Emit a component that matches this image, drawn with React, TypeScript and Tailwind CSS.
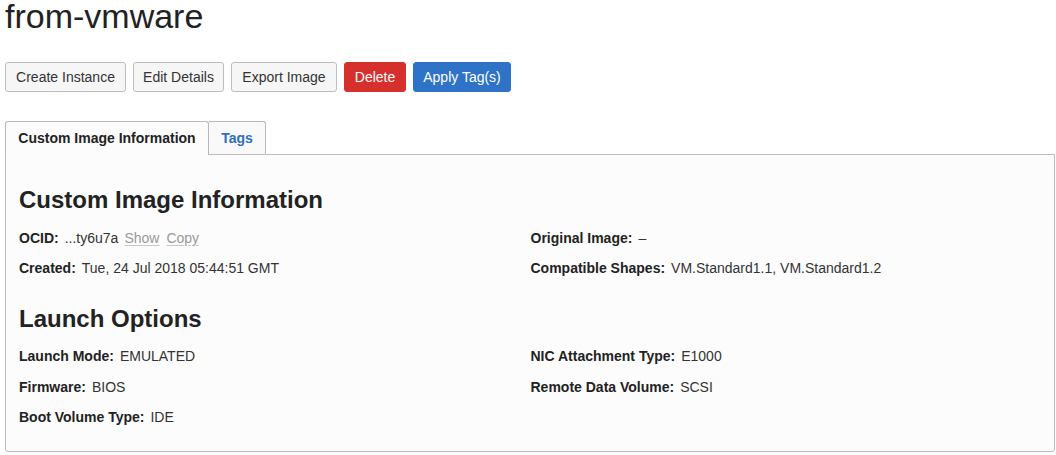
const font = { fontFamily: '"Liberation Sans", Arial, Helvetica, sans-serif' };

interface FieldProps {
  label: string;
  children: React.ReactNode;
}

const Field = ({ label, children }: FieldProps) => (
  <div className="flex items-baseline h-5 leading-5 text-[14px]">
    <span className="font-bold text-[#222]">{label}</span>
    <span className="ml-[6px] text-[#333]">{children}</span>
  </div>
);

const ActionButton = ({ label, width, tone = "default" }: { label: string; width: string; tone?: "default" | "danger" | "primary" }) => {
  const tones = {
    default: "bg-[#f6f6f6] border-[#bdbdbd] text-[#333]",
    danger: "bg-[#d6302d] border-[#d6302d] text-white",
    primary: "bg-[#2e73c7] border-[#2e73c7] text-white",
  };
  return (
    <button
      className={`${width} h-[30px] border rounded-[3px] text-[14px] leading-none flex items-center justify-center ${tones[tone]}`}
    >
      {label}
    </button>
  );
};

export default function App() {
  return (
    <div className="min-h-screen bg-white pl-[5px] pr-[1px]" style={font}>
      {/* Page title */}
      <h1 className="text-[34px] leading-[32px] text-[#222] font-normal">from-vmware</h1>

      {/* Action buttons */}
      <div className="flex gap-[7px] mt-[30px]">
        <ActionButton label="Create Instance" width="w-[121px]" />
        <ActionButton label="Edit Details" width="w-[91px]" />
        <ActionButton label="Export Image" width="w-[106px]" />
        <ActionButton label="Delete" width="w-[62px]" tone="danger" />
        <ActionButton label="Apply Tag(s)" width="w-[98px]" tone="primary" />
      </div>

      {/* Tabs */}
      <div className="flex items-start mt-[29px] relative z-10 h-[33px]">
        <div className="w-[204px] h-[34px] border border-b-0 border-[#b8b8b8] rounded-t-[3px] bg-[#fcfcfc] flex items-center justify-center text-[14px] font-bold text-[#222]">
          Custom Image Information
        </div>
        <div className="w-[57px] h-[33px] border border-l-0 border-b-0 border-[#b8b8b8] rounded-tr-[3px] bg-[#f9f9f9] flex items-center justify-center text-[14px] font-bold text-[#2f6fc0]">
          Tags
        </div>
      </div>

      {/* Panel */}
      <div className="w-[1050px] h-[298px] border border-[#bcbcbc] rounded-b-[3px] bg-[#fcfcfc] pl-[13px] pr-[12px] pt-[31px]">
        <h2 className="text-[24px] leading-[28px] font-bold text-[#222]">Custom Image Information</h2>
        <div className="grid grid-cols-2 gap-y-[10px] mt-[14px]">
          <Field label="OCID:">
            <span>...ty6u7a</span>
            <span className="ml-[6px] text-[#9a9a9a] underline decoration-[#c8c8c8] underline-offset-2">Show</span>
            <span className="ml-[7px] text-[#9a9a9a] underline decoration-[#c8c8c8] underline-offset-2">Copy</span>
          </Field>
          <Field label="Original Image:">–</Field>
          <Field label="Created:">Tue, 24 Jul 2018 05:44:51 GMT</Field>
          <Field label="Compatible Shapes:">VM.Standard1.1, VM.Standard1.2</Field>
        </div>

        <h2 className="mt-[27px] text-[24px] leading-[28px] font-bold text-[#222]">Launch Options</h2>
        <div className="grid grid-cols-2 gap-y-[10.5px] mt-[13px]">
          <Field label="Launch Mode:">EMULATED</Field>
          <Field label="NIC Attachment Type:">E1000</Field>
          <Field label="Firmware:">BIOS</Field>
          <Field label="Remote Data Volume:">SCSI</Field>
          <Field label="Boot Volume Type:">IDE</Field>
        </div>
      </div>
    </div>
  );
}
